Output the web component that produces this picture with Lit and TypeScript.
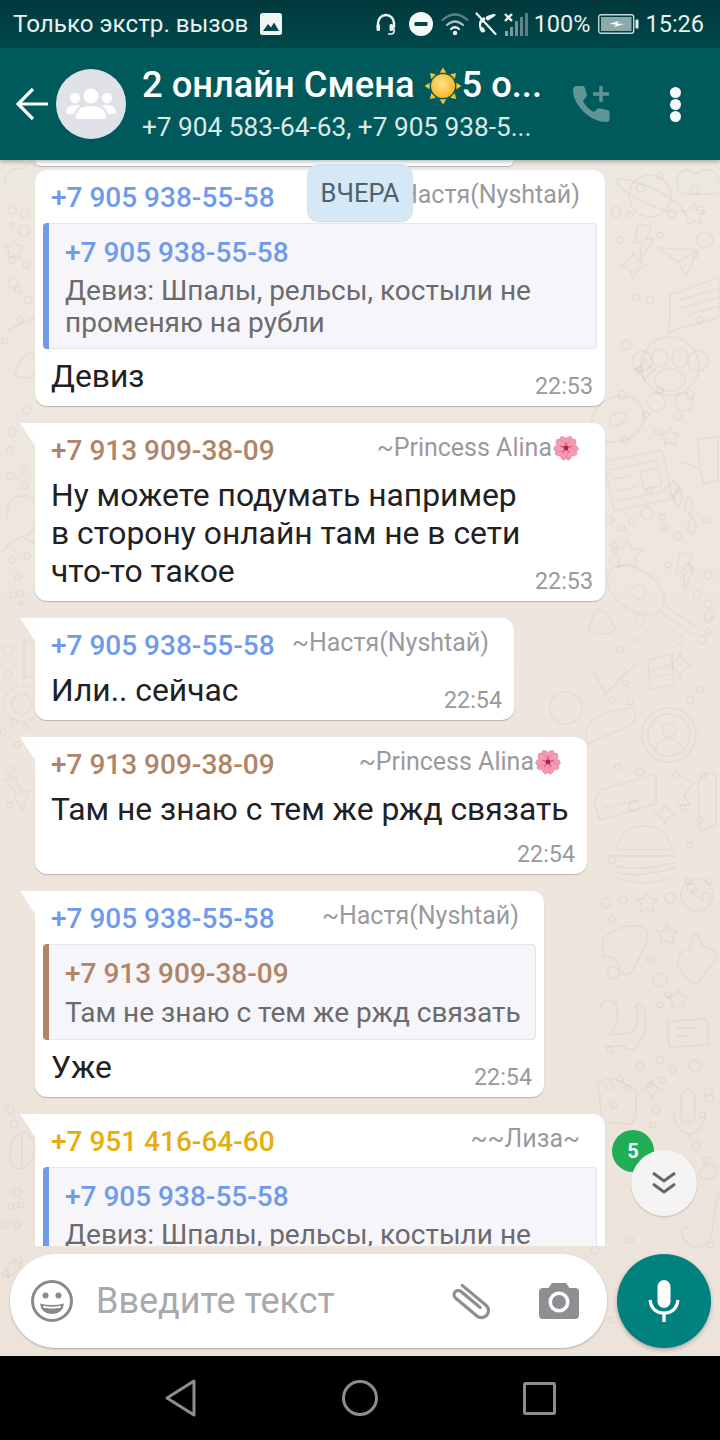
import { LitElement, html, css, svg } from "lit";
import { customElement } from "lit/decorators.js";

const BLUE = "#6f9bea";
const BROWN = "#b08468";
const GOLD = "#e5ad0f";

type Quote = { name: string; color: string; lines: string[] };
type Msg = {
  width: number;
  color: string;
  phone: string;
  alias: string;
  flower?: boolean;
  tail: boolean;
  quote?: Quote;
  text?: string[];
  time?: string;
  below?: boolean;
};

const DEVIZ = ["Девиз: Шпалы, рельсы, костыли не", "променяю на рубли"];

const MSGS: Msg[] = [
  { width: 570, color: BLUE, phone: "+7 905 938-55-58", alias: "~Настя(Nyshtай)", tail: false,
    quote: { name: "+7 905 938-55-58", color: BLUE, lines: DEVIZ }, text: ["Девиз"], time: "22:53" },
  { width: 570, color: BROWN, phone: "+7 913 909-38-09", alias: "~Princess Alina", flower: true, tail: true,
    text: ["Ну можете подумать например", "в сторону онлайн там не в сети", "что-то такое"], time: "22:53" },
  { width: 479, color: BLUE, phone: "+7 905 938-55-58", alias: "~Настя(Nyshtай)", tail: true,
    text: ["Или.. сейчас"], time: "22:54" },
  { width: 552, color: BROWN, phone: "+7 913 909-38-09", alias: "~Princess Alina", flower: true, tail: true,
    text: ["Там не знаю с тем же ржд связать"], time: "22:54", below: true },
  { width: 509, color: BLUE, phone: "+7 905 938-55-58", alias: "~Настя(Nyshtай)", tail: true,
    quote: { name: "+7 913 909-38-09", color: BROWN, lines: ["Там не знаю с тем же ржд связать"] }, text: ["Уже"], time: "22:54" },
  { width: 570, color: GOLD, phone: "+7 951 416-64-60", alias: "~~Лиза~", tail: true,
    quote: { name: "+7 905 938-55-58", color: BLUE, lines: DEVIZ } },
];

const flower = (size: number) => html`<svg class="emoji" width=${size} height=${size} viewBox="0 0 28 28" aria-hidden="true">
  ${[0, 72, 144, 216, 288].map((a) => svg`<path d="M14 14C8 11 6.500 5 9 2.500L12.500 3 14 5 15.500 3 19 2.500C21.500 5 20 11 14 14Z" fill="#f59ab0" stroke="#e57d97" stroke-width=".6" transform="rotate(${a} 14 14)"/>`)}
  ${[0, 72, 144, 216, 288].map((a) => svg`<line x1="14" y1="14" x2="14" y2="8" stroke="#c9446c" stroke-width=".9" transform="rotate(${a} 14 14)"/>`)}
  <circle cx="14" cy="14" r="2.400" fill="#a32650"/>
</svg>`;

const sun = html`<svg class="emoji sun" width="40" height="40" viewBox="0 0 40 40" aria-hidden="true">
  <defs><radialGradient id="sg" cx=".45" cy=".4" r=".65"><stop offset="0" stop-color="#ffe38a"/><stop offset="1" stop-color="#f9b21c"/></radialGradient></defs>
  ${[0, 45, 90, 135, 180, 225, 270, 315].map((a) => svg`<path d="M16.5 6 L20 0.5 L23.5 6Z" fill="#f5c132" transform="rotate(${a} 20 20)"/>`)}
  <circle cx="20" cy="20" r="12.6" fill="url(#sg)"/>
</svg>`;

/* Wallpaper: faint hand-drawn doodles placed on their own free canvas. */
const dots: [number, number, number][] = [
  [640,188,4],[660,176,3],[695,190,4],[616,212,5],[630,215,3],[672,214,4],[700,210,4],[620,240,3],[705,240,8],[660,235,3],[695,255,3],
  [650,300,4],[700,320,3],[636,298,3],[627,345,5],[640,370,3],[622,395,4],[660,390,3],[690,395,4],[625,440,3],[646,415,3],
  [678,416,4],[658,432,3],[650,490,3],[609,520,4],[622,528,3],[632,522,3],[647,513,6],[662,517,3],[664,527,3],[677,536,4],[615,545,3],[706,520,3],
  [688,568,4],[708,575,4],[697,595,4],[708,604,4],[709,615,5],[668,565,3],[640,620,5],[702,640,4],[708,618,4],[708,632,3],
  [635,640,3],[620,650,3],[690,700,4],[680,640,4],[625,683,3],[612,700,3],[630,702,3],[700,690,3],
  [640,772,4],[618,767,3],[676,775,3],[683,808,3],[634,806,5],[700,820,3],[703,775,3],[612,860,4],[690,845,3],[688,881,3],[706,897,4],
  [605,903,5],[623,900,4],[612,919,3],[670,898,5],[691,888,4],[709,881,3],[613,973,6],[650,960,3],[660,980,7],[668,995,3],[660,1005,3],
  [610,1050,3],[640,1066,4],[660,1060,4],[673,1070,3],[662,1080,3],[620,1079,3],[609,1086,4],[695,1066,6],[708,1092,4],[709,1098,4],
  [656,1110,4],[650,1085,3],[614,1105,3],[627,1088,3],[620,1140,3],[653,1125,3],[696,1145,4],[702,1115,3],[706,1160,3],
  [27,410,4],[12,432,4],[10,450,3],[11,476,4],[24,470,3],[25,486,3],[12,560,3],[27,556,3],[18,577,3],[20,594,3],[13,595,3],[21,603,2],
  [8,650,5],[8,675,4],[14,722,3],[3,732,3],[17,745,3],[26,727,3],[10,770,4],[10,805,3],
  [12,210,4],[25,215,4],[12,225,2],[24,231,5],[12,260,3],[26,265,3],[13,283,5],[18,290,3],[5,341,3],[28,300,4],[20,320,3],
  [10,1110,4],[14,1124,4],[17,1192,4],[21,1205,3],[11,1206,3],[17,1225,3],[5,1225,3],[18,1260,4],[6,1274,3],
  [595,1250,4],[630,1240,3],[710,1245,3],[611,1320,3],
];

const stars: [number, number, number][] = [[694,215,12],[627,555,16],[647,903,11],[667,935,11],[678,1000,11],[670,437,10],[14,250,11]];
const sparks: [number, number, number][] = [[633,265,14],[645,370,12],[652,1089,9],[680,665,13],[673,489,10],[665,814,11]];

const Doodles = svg`
  ${dots.map(([x, y, r]) => svg`<circle cx=${x} cy=${y} r=${r}/>`)}
  ${stars.map(([x, y, r]) => {
    const pts: string[] = [];
    for (let i = 0; i < 10; i++) {
      const a = (Math.PI / 5) * i - Math.PI / 2;
      const k = i % 2 ? r * 0.5 : r;
      pts.push(`${(x + Math.cos(a) * k).toFixed(1)},${(y + Math.sin(a) * k).toFixed(1)}`);
    }
    return svg`<polygon points=${pts.join(" ")} stroke-linejoin="round"/>`;
  })}
  ${sparks.map(([x, y, r]) => svg`<path d="M${x} ${y - r}Q${x + 2} ${y - 2} ${x + r} ${y}Q${x + 2} ${y + 2} ${x} ${y + r}Q${x - 2} ${y + 2} ${x - r} ${y}Q${x - 2} ${y - 2} ${x} ${y - r}Z"/>`)}
  <g transform="translate(650 196) rotate(25)"><circle r="21"/><ellipse rx="36" ry="8"/></g>
  <path d="M678 184c-4-14 12-18 18-10 8-8 24-4 22 8 6 2 4 12-4 12h-28c-6 0-10-4-8-10z"/>
  <path d="M638 225l14 0-6 14 8 0-14 22 2-18-8 0z"/>
  <path d="M658 248l40 2-12 26-8-14z M678 262l20-12"/>
  <path d="M670 295l50-18v40l-42 12-10 4 2-14z M680 300l40-12 M682 308l38-11 M684 316l36-10"/>
  <g transform="translate(670 366)"><circle r="29"/><circle cx="-28" cy="-5" r="10"/><circle cx="28" cy="-5" r="10"/><ellipse cx="-10" cy="-8" rx="8" ry="9"/><ellipse cx="10" cy="-8" rx="8" ry="9"/><ellipse cx="0" cy="14" rx="15" ry="11"/><circle cx="-14" cy="36" r="9"/><circle cx="14" cy="36" r="9"/></g>
  <g transform="translate(618 419) rotate(-25)"><ellipse rx="27" ry="22"/><ellipse rx="9" ry="6"/></g>
  <g transform="translate(640 480) rotate(-12)"><rect x="-32" y="-25" width="60" height="50" rx="3"/><path d="M-26-16h48M-26 16h48M-26-6h20M-26 6h20"/><rect x="2" y="-8" width="18" height="18"/></g>
  <g transform="translate(636 590) rotate(35)"><ellipse rx="32" ry="20"/><circle cx="3" r="7"/><path d="M32-4h40M32 4h40"/></g>
  <path d="M698 440l20-4 0 44-14 4-4-16-20-6 20 6z"/>
  <path d="M678 488q-8 12 0 18q8-6 0-18z M689 496q-8 12 0 18q8-6 0-18z M692 516q-8 12 0 18q8-6 0-18z"/>
  <path d="M680 552l12 4-4 10 6 2-10 22 0-16-8-2z"/>
  <path d="M594 612q12-6 16 6l6 12q-16 8-28 0l4-10z"/>
  <circle cx="566" cy="708" r="16"/>
  <path d="M592 670l14 24 30-30M606 694l22-24"/>
  <path d="M648 660l24-6 2 30-24 6z M652 670l16-4M653 678l16-4"/>
  <path d="M592 720q20-12 42-12l2 8q-4 12-22 16l-26 12q-6-10 4-24z"/>
  <g transform="translate(669 735)"><circle r="27"/><circle r="21"/><circle cy="-5" r="7"/><path d="M-15 15q15-24 30 0"/></g>
  <path d="M600 790l56-16 0 30-56 16-6-16z M604 808l36-8"/>
  <path d="M704 775q8-4 12 0l0 50-16 6-2-50z M680 775l14 8-10 12 6 10-12 0"/>
  <g transform="translate(644 858)"><path d="M-28-8q4-24 28-24t28 24z"/><path d="M-32-2h64M-30 8q30 6 62-4M-30 14q14 4 30 2t32-6"/><path d="M-26 20q26 10 52 0"/></g>
  <circle cx="697" cy="895" r="16"/>
  <path d="M692 890l10 12M692 890l8 0M692 890l0 8"/>
  <path d="M678 965q-2-14 12-16q0-12 6-16q6 8 6 14q14 0 14 12l-20 26q-14-8-18-20z"/>
  <path d="M603 938q14-12 28-12q14-2 16 6q2 8-4 18l-10 20q-6 8-12 2l-6-14-12-2z"/>
  <path d="M600 1008q6-14 16-4q4 20-6 30q16 2 24-4 6-10 2-24 4-6 8 2 4 20-2 30l-6 10q-8 4-12-2h-20"/>
  <rect x="668" y="1020" width="40" height="26" rx="3" transform="rotate(-4 688 1033)"/>
  <path d="M676 1028h22M676 1036h14"/>
  <rect x="681" y="1090" width="14" height="32" rx="7"/>
  <path d="M673 1110q3 22 15 24q15 0 18-22M690 1134v6"/>
  <path d="M598 1084q10-10 24-2l14 8 0 24-4 10-30-2z"/>
  <path d="M688 1228q-6-4-6 6 2 10 14 14 14-2 16-16l4-30q2-8 8-10"/>
  <path d="M704 1168q6-8 12 0 4 8-10 12-12-4-2-12z"/>
  <path d="M8 520q-4-24 14-24t14 24q0 10-10 16M2 552q10-12 20-16l16 10"/>
  <path d="M24 640l14 4 2 30-16 4z"/>
  <g transform="translate(22 704)"><circle r="10"/><circle r="18" stroke-dasharray="8 4"/></g>
  <path d="M5 780l10-4 6 16 8-2-6 20-10-14 4-2z"/>
  <path d="M10 1150q2-14 12-18q16 4 12 22q0 10-12 14t-12-18z M22 1132v36"/>
  <path d="M8 1265q8-10 14 0q-6 8-14 12q-4-8 0-12z"/>
  <path d="M5 185q0-18 18-16q8-12 14 0"/>
  <path d="M14 375q6-18 18-24l6 20q-8 12-24 4z M8 330l30-14"/>
`;

@customElement("chat-bubble")
class ChatBubble extends LitElement {
  static properties = { msg: { attribute: false } };
  declare msg: Msg;

  static styles = css`
    :host { display: block; flex: none; position: relative; align-self: flex-start; }
    .tail {
      position: absolute; left: -15px; top: 0; width: 22px; height: 24px; background: #fff;
      clip-path: polygon(0 0, 100% 0, 100% 100%, 15px 100%, 15px 23px);
    }
    .bubble {
      background: #fff; border-radius: 12px; box-shadow: 0 1px 1px rgba(0, 0, 0, .22);
      padding: 12px 8px 8px; box-sizing: border-box; position: relative;
    }
    .bubble.tailed { border-top-left-radius: 0; }
    .head { display: flex; justify-content: space-between; align-items: center; height: 32px; padding: 0 17px 0 8px; }
    .phone { font-weight: 500; font-size: 28px; line-height: 32px; white-space: nowrap; }
    .alias {
      color: #9a9a9e; font-size: 25px; line-height: 32px; white-space: nowrap;
      display: flex; align-items: center; position: relative; top: -3px;
    }
    .emoji { flex: none; display: block; }
    .quote {
      margin-top: 9px; background: #f6f5f9; border: 1px solid #e6e5e9; border-left: none;
      border-radius: 4px; padding: 10px 16px 9px 22px; display: flex; flex-direction: column;
      position: relative;
    }
    .quote::before {
      content: ""; position: absolute; left: 0; top: -1px; bottom: -1px; width: 6px;
      border-radius: 4px 0 0 4px; background: var(--q);
    }
    .qname { font-weight: 500; font-size: 28px; line-height: 38px; height: 38px; margin-bottom: 3px; white-space: nowrap; }
    .qline { color: #6b6b6f; font-size: 28px; line-height: 32px; white-space: nowrap; }
    .qname + .qline:last-child { padding-top: 1px; padding-bottom: 1px; }
    .text { margin-top: 9px; padding: 0 8px; color: #212124; font-size: 31.8px; line-height: 38px; }
    .quote + .text { margin-top: 8px; }
    .line { white-space: nowrap; }
    .time {
      color: #9a9a9e; font-size: 23.3px; line-height: 24px; text-align: right; padding-right: 4px; margin-top: -21px;
    }
    .time.below { margin-top: 14px; }
  `;

  render() {
    const m = this.msg;
    return html`
      ${m.tail ? html`<div class="tail"></div>` : ""}
      <div class="bubble ${m.tail ? "tailed" : ""}" style="width:${m.width}px">
        <div class="head">
          <span class="phone" style="color:${m.color}">${m.phone}</span>
          <span class="alias">${m.alias}${m.flower ? flower(28) : ""}</span>
        </div>
        ${m.quote
          ? html`<div class="quote" style="--q:${m.quote.color}">
              <div class="qname" style="color:${m.quote.color}">${m.quote.name}</div>
              ${m.quote.lines.map((l) => html`<div class="qline">${l}</div>`)}
            </div>`
          : ""}
        ${m.text ? html`<div class="text">${m.text.map((l) => html`<div class="line">${l}</div>`)}</div>` : ""}
        ${m.time ? html`<div class="time ${m.below ? "below" : ""}">${m.time}</div>` : ""}
      </div>`;
  }
}

@customElement("app-root")
export class AppRoot extends LitElement {
  static styles = css`
    :host {
      display: flex; flex-direction: column; width: 720px; height: 1440px; overflow: hidden;
      font-family: Roboto, "Liberation Sans", sans-serif; background: #000;
    }
    .status {
      height: 48px; flex: none; background: linear-gradient(#00383b, #00494c); color: #e9f1f1;
      display: flex; align-items: center; padding: 0 16px 0 13px; font-size: 24.2px; box-sizing: border-box;
    }
    .status .left { display: flex; align-items: center; gap: 11px; flex: 1; white-space: nowrap; }
    .status .right { display: flex; align-items: center; font-size: 23.5px; }
    .status svg { display: block; flex: none; }
    .ic-head { margin-right: 12px; }
    .ic-dnd { margin-right: 8px; }
    .ic-wifi { margin-right: 5px; }
    .ic-call { margin-right: 7px; }
    .ic-sig { margin-right: 6px; }
    .ic-bat { margin: 0 6px 0 8px; }
    .appbar {
      height: 112px; flex: none; background: #005a5c; display: flex; align-items: center;
      position: relative; z-index: 3; box-shadow: 0 2px 4px rgba(0, 0, 0, .25); color: #fff;
    }
    .back { margin-left: 16px; margin-right: 8px; flex: none; }
    .avatar {
      width: 70px; height: 70px; border-radius: 50%; background: #e1e2e8; flex: none; display: flex;
      align-items: center; justify-content: center;
    }
    .titles { margin-left: 16px; width: 400px; flex: none; display: flex; flex-direction: column; }
    .title {
      font-weight: 500; font-size: 36.3px; line-height: 44px; display: flex; align-items: center; white-space: nowrap; height: 44px;
    }
    .title .sun { margin: 0 -1px 0 10px; position: relative; top: 1px; }
    .sub { font-size: 26.2px; line-height: 36px; color: #dbe9e9; white-space: nowrap; margin-top: 2px; }
    .call { margin-left: 30px; flex: none; }
    .dots { margin-left: 60px; flex: none; display: flex; flex-direction: column; gap: 1px; }
    .dots i { display: block; width: 11px; height: 11px; border-radius: 50%; background: #f4f8f8; }
    .main { flex: 1; position: relative; background: linear-gradient(#ede8e1, #eee5dd 50%, #ece3da); display: flex; flex-direction: column; min-height: 0; }
    .wall { position: absolute; inset: 0; fill: none; stroke: #8a7560; stroke-opacity: .08; stroke-width: 1.6; }
    .list {
      height: 1086px; flex: none; overflow: hidden; position: relative; padding-left: 35px; box-sizing: border-box;
      display: flex; flex-direction: column; gap: 17px;
    }
    .sliver {
      width: 479px; height: 6px; background: #fff; border-radius: 0 0 12px 12px; flex: none; margin-bottom: -13px;
      box-shadow: 0 1px 1px rgba(0, 0, 0, .22);
    }
    .composer { flex: 1; position: relative; display: flex; padding: 8px 9px 9px 10px; gap: 10px; align-items: stretch; box-sizing: border-box; }
    .input {
      width: 597px; flex: none; background: #fff; border-radius: 46px; box-shadow: 0 1px 2px rgba(0, 0, 0, .25);
      display: flex; align-items: center; padding-left: 21px; box-sizing: border-box;
    }
    .ph { margin-left: 23px; color: #a9a9ad; font-size: 36px; width: 352px; white-space: nowrap; }
    .clip { flex: none; }
    .cam { flex: none; margin-left: 47px; }
    .mic {
      width: 94px; height: 94px; border-radius: 50%; background: #00807e; flex: none; align-self: center; display: flex;
      align-items: center; justify-content: center; box-shadow: 0 2px 4px rgba(0, 0, 0, .25);
    }
    .fab {
      position: absolute; left: 631px; top: 990px; width: 66px; height: 66px; border-radius: 50%; background: #f6f4f3;
      box-shadow: 0 1px 2px rgba(0, 0, 0, .18); display: flex; align-items: center; justify-content: center; z-index: 2;
    }
    .badge {
      position: absolute; left: 612px; top: 970px; width: 42px; height: 42px; border-radius: 50%; background: #1fae55;
      color: #f4fff6; font-weight: 700; font-size: 20px; display: flex; align-items: center; justify-content: center; z-index: 2;
    }
    .day {
      position: absolute; left: 307px; top: 4px; width: 106px; height: 57px; box-sizing: border-box; border-radius: 12px;
      background: #d4e8f6; color: #4f5f6d; font-size: 25.5px; display: flex; align-items: center; justify-content: center;
      box-shadow: 0 1px 1px rgba(0, 0, 0, .18); z-index: 2;
    }
    .nav { height: 84px; flex: none; background: #000; display: flex; align-items: center; justify-content: space-between; padding: 0 164px 0 165px; }
    .nav svg { display: block; }
  `;

  render() {
    return html`
      <div class="status">
        <div class="left">
          <span>Только экстр. вызов</span>
          <svg width="24" height="24" viewBox="0 0 24 24"><rect x="1" y="1" width="22" height="22" rx="2.5" fill="#f1f5f5"/><path d="M4 19l5-7 3 3.5 3-5 5 8.5z" fill="#00474a"/></svg>
        </div>
        <div class="right">
          <svg class="ic-head" width="22" height="24" viewBox="0 0 22 24" fill="none" stroke="#f1f5f5" stroke-width="2.4"><path d="M3 15V11a8 8 0 0 1 16 0v4"/><rect x="1.5" y="12" width="3.5" height="7" rx="1.5" fill="#f1f5f5" stroke="none"/><rect x="14.5" y="12" width="3.5" height="7" rx="1.5" fill="#f1f5f5" stroke="none"/><path d="M19 15v4q0 3-3 3h-3" stroke-width="1.6"/></svg>
          <svg class="ic-dnd" width="24" height="24" viewBox="0 0 24 24"><circle cx="12" cy="12" r="12" fill="#f6f9f9"/><rect x="5.5" y="10" width="13" height="4" rx="1" fill="#00474a"/></svg>
          <svg class="ic-wifi" width="28" height="24" viewBox="0 0 28 24" fill="none" stroke-width="2.2" stroke-linecap="round"><path d="M1.5 8Q14-3 26.500 8" stroke="#5c8183"/><path d="M6 13Q14 6 22 13" stroke="#a9c0c1"/><path d="M10 17Q14 13.500 18 17" stroke="#f1f5f5"/><circle cx="14" cy="21" r="2.200" fill="#f1f5f5" stroke="none"/></svg>
          <svg class="ic-call" width="23" height="24" viewBox="0 0 23 24"><path d="M8 4q-3 1-4.500 4q-1.500 5 1 10q1 2 3 1.500l1.500-1q.5-.8 0-1.500l-1.500-2.500q-.5-.8-1.500-.3l-.5.3q-.7-2.500 0-5l.7.3q1 .2 1.500-.7l1.500-2.500q.5-.8-.2-1.500z" fill="#f1f5f5" transform="translate(2 1)"/><path d="M22 3q-1-1.500-3-1l-6 2q-2 1-1 3l1 1q1 1 2 0l3-2q2-1 4-3z" fill="#f1f5f5"/><line x1="2.500" y1="1.500" x2="21.500" y2="22" stroke="#f1f5f5" stroke-width="2.200" stroke-linecap="round"/></svg>
          <svg class="ic-sig" width="24" height="24" viewBox="0 0 24 24"><path d="M1 2l7 7M8 2l-7 7" stroke="#f1f5f5" stroke-width="2.400"/><rect x="1" y="19" width="3" height="5" fill="#8aa6a7"/><rect x="6" y="15" width="3" height="9" fill="#7a9b9c"/><rect x="11" y="9" width="3" height="15" fill="#6e9192"/><rect x="16" y="5" width="3" height="19" fill="#638688"/><rect x="21" y="1" width="3" height="23" fill="#5b7f81"/></svg>
          <span>100%</span>
          <svg class="ic-bat" width="41" height="20" viewBox="0 0 41 20"><rect x=".7" y=".7" width="35" height="18.600" rx="2.500" fill="none" stroke="#c6d6d6" stroke-width="1.400"/><rect x="3" y="3" width="30.500" height="14" fill="#8fa9aa"/><rect x="37.500" y="5.500" width="3" height="9" rx="1" fill="#e4eded"/><path d="M11 10l10-3-2 2.500 7 .5-10 3 2-2.500z" fill="#fff"/></svg>
          <span>15:26</span>
        </div>
      </div>

      <div class="appbar">
        <svg class="back" width="32" height="32" viewBox="0 0 32 32" fill="none" stroke="#fff" stroke-width="3.200"><path d="M32 16H2M17 1L2 16l15 15"/></svg>
        <div class="avatar">
          <svg width="52" height="32" viewBox="0 0 52 32" fill="#fff"><circle cx="26" cy="8" r="7.500"/><circle cx="10" cy="10" r="5"/><circle cx="42" cy="10" r="5"/><path d="M11 29q1-11 15-11t15 11q0 2-2 2H13q-2 0-2-2z"/><path d="M1 24q1-7 9-7q3 0 5 1q-5 3-6 8H3q-2 0-2-2z"/><path d="M51 24q-1-7-9-7q-3 0-5 1q5 3 6 8h6q2 0 2-2z"/></svg>
        </div>
        <div class="titles">
          <div class="title">2 онлайн Смена ${sun}5 о...</div>
          <div class="sub">+7 904 583-64-63, +7 905 938-5...</div>
        </div>
        <svg class="call" width="38" height="38" viewBox="0 0 38 38"><path d="M5 1l6 0q1 0 2 2l2 7q0 1-1 2l-3 4q3 7 11 11l3-3q1-1 2.500-.8l8 1.800q2 .5 2 2v7q0 3-3 3C17 37 1 19 1 5q0-4 4-4z" fill="#5f9596"/><path d="M29 1v16M21 9h16" stroke="#5f9596" stroke-width="3.400"/></svg>
        <div class="dots"><i></i><i></i><i></i></div>
      </div>

      <div class="main">
        <svg class="wall" width="720" height="1196" viewBox="0 160 720 1196" aria-hidden="true">${Doodles}</svg>
        <div class="list">
          <div class="sliver"></div>
          ${MSGS.map((m) => html`<chat-bubble .msg=${m}></chat-bubble>`)}
        </div>
        <div class="day">ВЧЕРА</div>
        <div class="badge">5</div>
        <div class="fab">
          <svg width="26" height="24" viewBox="0 0 26 24" fill="none" stroke="#666669" stroke-width="3"><path d="M2 2l11 8 11-8M2 13l11 8 11-8"/></svg>
        </div>
        <div class="composer">
          <div class="input">
            <svg width="42" height="42" viewBox="0 0 42 42"><circle cx="21" cy="21" r="19.500" fill="none" stroke="#8a8a8e" stroke-width="3"/><circle cx="14.500" cy="15.500" r="3" fill="#8a8a8e"/><circle cx="27.500" cy="15.500" r="3" fill="#8a8a8e"/><path d="M9 23.500q12 3 24 0q-1 10.500-12 10.500t-12-10.500z" fill="#8a8a8e"/><path d="M12 25.800q9 1.800 18 0l-.6 2q-8.400 1.500-16.800 0z" fill="#fff"/></svg>
            <div class="ph">Введите текст</div>
            <svg class="clip" width="44" height="40" viewBox="0 0 44 40" fill="none" stroke="#8e8e92" stroke-width="3.200" stroke-linecap="round"><g transform="translate(22 20) rotate(40)"><path d="M12-1.500H-13a4.250 4.250 0 0 0 0 8.500H15a7 7 0 0 0 0-14H-16"/></g></svg>
            <svg class="cam" width="40" height="38" viewBox="0 0 40 38"><path d="M13 1h14l3.500 5H36q4 0 4 4v23q0 4-4 4H4q-4 0-4-4V10q0-4 4-4h5.500z" fill="#8e8e93"/><circle cx="20" cy="20" r="10.500" fill="#fff"/><circle cx="20" cy="20" r="7" fill="#8e8e93"/></svg>
          </div>
          <div class="mic">
            <svg width="32" height="42" viewBox="0 0 32 42"><rect x="9.500" y="0" width="13" height="28" rx="6.500" fill="#fff"/><path d="M2 20q2 13 14 13t14-13" fill="none" stroke="#fff" stroke-width="3.200"/><rect x="14.300" y="32" width="3.400" height="10" fill="#fff"/></svg>
          </div>
        </div>
      </div>

      <div class="nav">
        <svg width="32" height="38" viewBox="0 0 32 38" fill="none" stroke="#8e8e8e" stroke-width="3" stroke-linejoin="round"><path d="M29 2v34L2 19z"/></svg>
        <svg width="36" height="36" viewBox="0 0 36 36" fill="none" stroke="#8e8e8e" stroke-width="3"><circle cx="18" cy="18" r="16.500"/></svg>
        <svg width="33" height="33" viewBox="0 0 33 33" fill="none" stroke="#8e8e8e" stroke-width="3" stroke-linejoin="round"><rect x="1.500" y="1.500" width="30" height="30" rx="1"/></svg>
      </div>
    `;
  }
}
